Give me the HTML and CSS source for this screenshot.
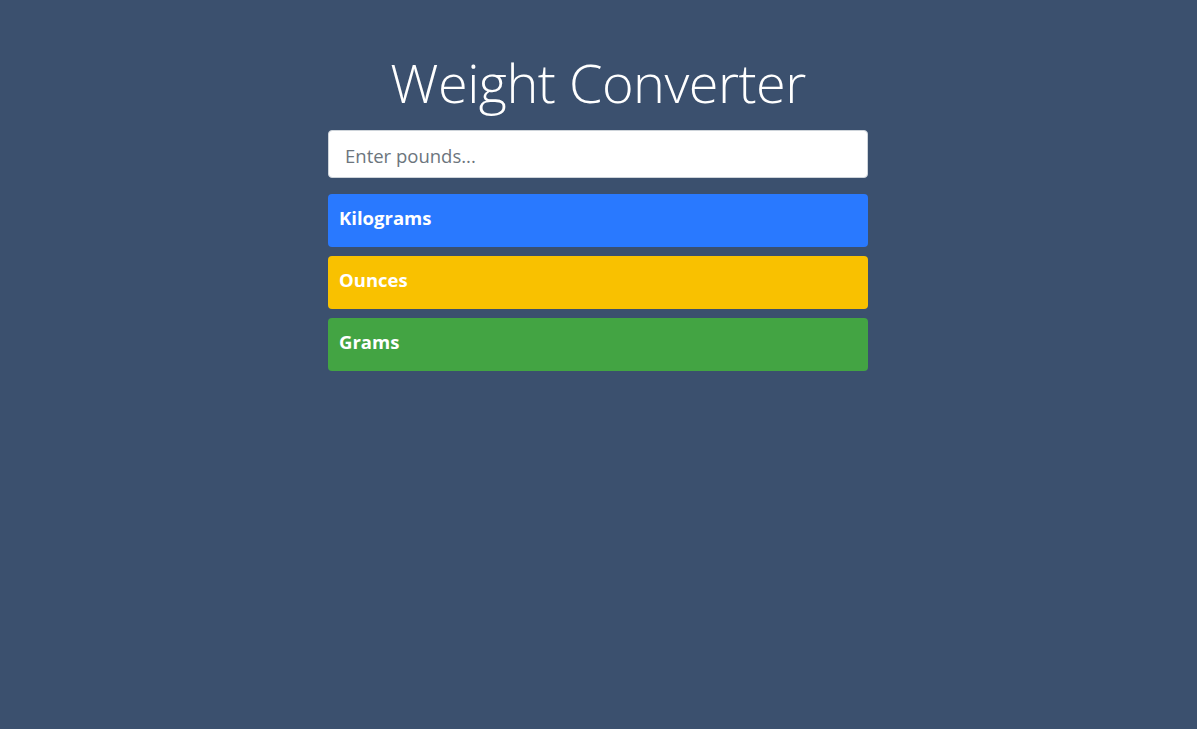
FILE: index.html
```html
<!DOCTYPE html>
<html lang="en">
<head>
<meta charset="utf-8">
<title>Weight Converter</title>
<link rel="stylesheet" href="styles.css">
</head>
<body>
<main class="container">
  <h1 class="title">Weight Converter</h1>
  <input class="pounds" type="number" placeholder="Enter pounds...">
  <div class="results">
    <div class="card card-blue"><span class="card-label">Kilograms</span></div>
    <div class="card card-yellow"><span class="card-label">Ounces</span></div>
    <div class="card card-green"><span class="card-label">Grams</span></div>
  </div>
</main>
</body>
</html>
```
FILE: styles.css
```css
html, body {
  margin: 0;
  padding: 0;
}
body {
  background: #3b506e;
  font-family: "Open Sans", "Noto Sans", sans-serif;
  color: #fff;
  min-height: 729px;
}
.container {
  width: 540px;
  padding-right: 1px;
  margin: 0 auto;
  padding-top: 45px;
  display: flex;
  flex-direction: column;
}
.title {
  margin: 0 0 11px;
  font-weight: 300;
  font-size: 54px;
  line-height: 74px;
  text-align: center;
  letter-spacing: -0.5px;
}
.pounds {
  box-sizing: border-box;
  height: 48px;
  width: 100%;
  border: 1px solid #ced4da;
  border-radius: 4px;
  padding: 2px 16px 0;
  font-family: inherit;
  font-size: 18.5px;
  color: #495057;
  background: #fff;
  outline: none;
  margin: 0;
}
.pounds::placeholder {
  color: #6c757d;
}
.results {
  margin-top: 16px;
  display: flex;
  flex-direction: column;
  gap: 9px;
}
.card {
  box-sizing: border-box;
  height: 53px;
  border-radius: 4px;
  padding: 0 11px 7px;
  display: flex;
  align-items: center;
}
.card-label {
  font-weight: 700;
  font-size: 18.5px;
}
.card-blue { background: #2979ff; }
.card-yellow { background: #f9c100; }
.card-green { background: #43a443; }
```
